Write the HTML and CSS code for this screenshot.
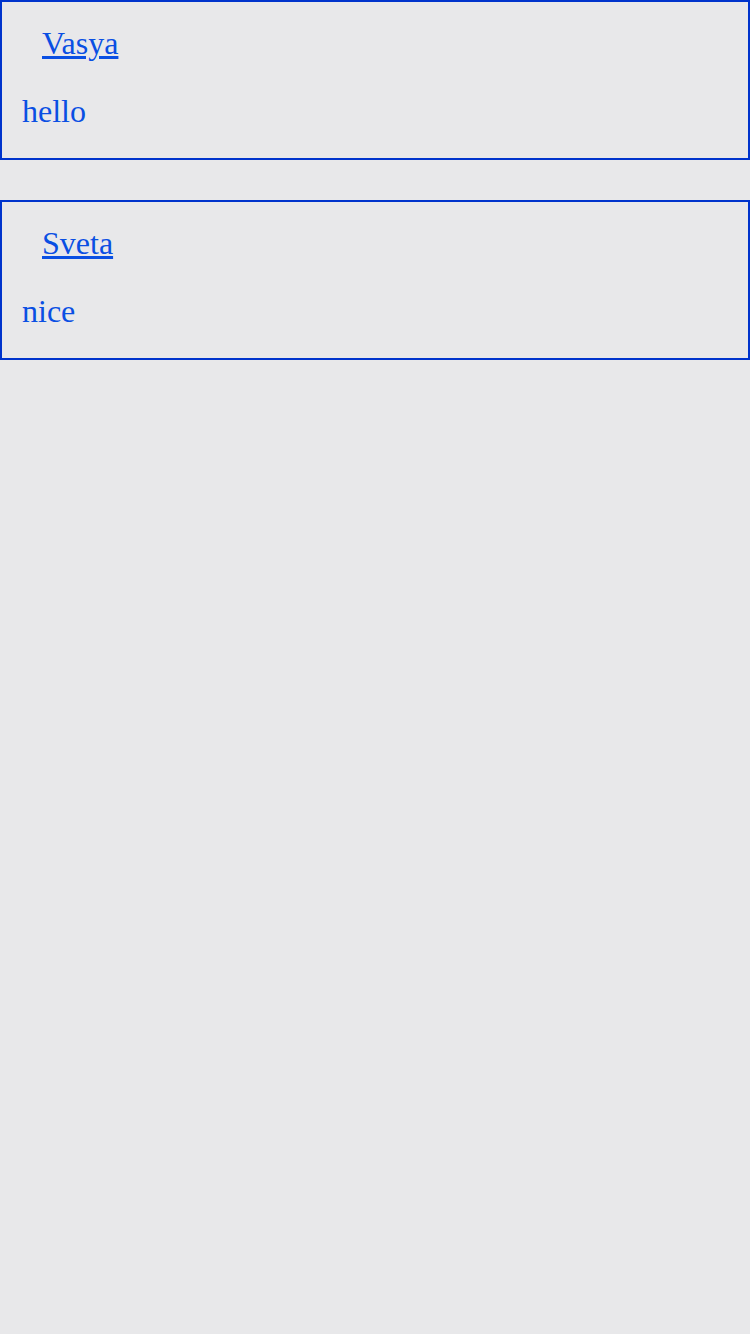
FILE: index.html
```html
<!DOCTYPE html>
<html>
<head>
<meta charset="utf-8">
<link rel="stylesheet" href="styles.css">
</head>
<body>
<div class="list">
  <div class="card">
    <a class="name" href="#">Vasya</a>
    <div class="msg">hello</div>
  </div>
  <div class="card">
    <a class="name" href="#">Sveta</a>
    <div class="msg">nice</div>
  </div>
</div>
</body>
</html>
```
FILE: styles.css
```css
html, body {
  margin: 0;
  padding: 0;
  background: #e8e8ea;
  min-height: 100%;
}
body {
  font-family: "Liberation Serif", "Times New Roman", serif;
  font-size: 32px;
  line-height: 37px;
  color: #0a4fe3;
}
.list {
  display: flex;
  flex-direction: column;
  gap: 40px;
}
.card {
  border: 2px solid #0033cc;
  padding: 23px 20px 28px;
  display: flex;
  flex-direction: column;
  align-items: flex-start;
  gap: 31px;
}
.name {
  color: #0a4fe3;
  text-decoration: underline;
  margin-left: 20px;
}
.msg {
  color: #0a4fe3;
}
```
